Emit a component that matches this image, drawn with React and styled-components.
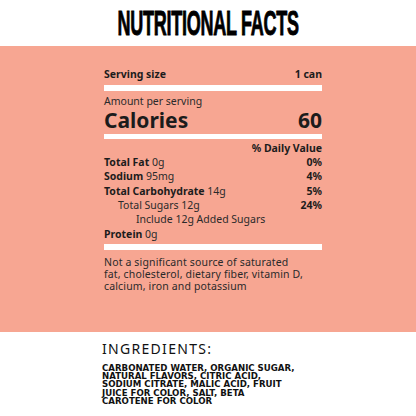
import React from 'react'
import styled, { createGlobalStyle } from 'styled-components'

const Global = createGlobalStyle`
  html, body { margin: 0; padding: 0; background: #fff; }
  body { font-family: "Noto Sans", "DejaVu Sans", sans-serif; color: #1c1c1c; }
`;

const Page = styled.div`
  width: 416px;
  height: 416px;
  overflow: hidden;
  display: flex;
  flex-direction: column;
`;

const Header = styled.header`
  height: 46px;
  flex-shrink: 0;
  display: flex;
  justify-content: center;
  align-items: center;
`;

const Title = styled.h1`
  margin: 0;
  font-family: "Liberation Sans Narrow", "Liberation Sans", sans-serif;
  font-weight: 700;
  font-size: 34px;
  line-height: 34px;
  letter-spacing: -0.5px;
  color: #000;
  -webkit-text-stroke: 0.9px #000;
  transform: scale(0.53, 1.03);
  white-space: nowrap;
`;

const Panel = styled.section`
  background: #f7a692;
  height: 286px;
  flex-shrink: 0;
  padding: 21px 0 0 104px;
  box-sizing: border-box;
`;

const Label = styled.div`
  width: 218px;
  display: flex;
  flex-direction: column;
`;

const Row = styled.div`
  display: flex;
  justify-content: space-between;
  align-items: baseline;
  font-size: 10.5px;
  line-height: 14.3px;
  padding-left: ${p => p.indent || 0}px;
  font-weight: ${p => (p.bold ? 700 : 400)};
`;

const Strong = styled.span`
  font-weight: 700;
`;

const Light = styled.span`
  font-weight: 400;
  color: #2a2a2a;
`;

const Bar = styled.div`
  height: ${p => p.h}px;
  background: #fff;
  margin: ${p => p.m};
`;

const Small = styled.div`
  font-size: 10.5px;
  line-height: 13.6px;
  color: #2a2a2a;
`;

const Calories = styled.div`
  display: flex;
  justify-content: space-between;
  font-size: 21px;
  line-height: 22px;
  font-weight: 700;
  margin: 0 0 3px;
`;

const Note = styled.p`
  margin: 6.5px 0 0;
  font-size: 10.5px;
  line-height: 12px;
  letter-spacing: 0.15px;
  color: #2a2a2a;
`;

const Ingredients = styled.section`
  padding: 8.6px 0 0 102px;
`;

const IngTitle = styled.h2`
  margin: 0 0 7px;
  font-size: 14px;
  line-height: 16px;
  font-weight: 400;
  letter-spacing: 1.3px;
  color: #111;
`;

const IngList = styled.p`
  margin: 0;
  font-family: "DejaVu Sans", "Noto Sans", sans-serif;
  font-size: 8.6px;
  line-height: 8.4px;
  font-weight: 700;
  color: #111;
  text-transform: uppercase;
  white-space: nowrap;
`;

const nutrients = [
  { name: 'Total Fat', amt: '0g', dv: '0%' },
  { name: 'Sodium', amt: '95mg', dv: '4%' },
  { name: 'Total Carbohydrate', amt: '14g', dv: '5%' },
]

export default function App() {
  return (
    <Page>
      <Global />
      <Header>
        <Title>NUTRITIONAL FACTS</Title>
      </Header>
      <Panel>
        <Label>
          <Row bold>
            <span>Serving size</span>
            <span>1 can</span>
          </Row>
          <Bar h={6} m="4px 0 4px" />
          <Small>Amount per serving</Small>
          <Calories>
            <span>Calories</span>
            <span>60</span>
          </Calories>
          <Bar h={5} m="0 0 2px" />
          <Row bold>
            <span />
            <span>% Daily Value</span>
          </Row>
          {nutrients.map(n => (
            <Row key={n.name}>
              <span><Strong>{n.name}</Strong> <Light>{n.amt}</Light></span>
              <Strong>{n.dv}</Strong>
            </Row>
          ))}
          <Row indent={14}>
            <Light>Total Sugars 12g</Light>
            <Strong>24%</Strong>
          </Row>
          <Row indent={32}>
            <Light>Include 12g Added Sugars</Light>
          </Row>
          <Row>
            <span><Strong>Protein</Strong> <Light>0g</Light></span>
          </Row>
          <Bar h={6} m="3px 0 0" />
          <Note>
            Not a significant source of saturated<br />
            fat, cholesterol, dietary fiber, vitamin D,<br />
            calcium, iron and potassium
          </Note>
        </Label>
      </Panel>
      <Ingredients>
        <IngTitle>INGREDIENTS:</IngTitle>
        <IngList>
          Carbonated water, organic sugar,<br />
          natural flavors, citric acid,<br />
          sodium citrate, malic acid, fruit<br />
          juice for color, salt, beta<br />
          carotene for color
        </IngList>
      </Ingredients>
    </Page>
  )
}
